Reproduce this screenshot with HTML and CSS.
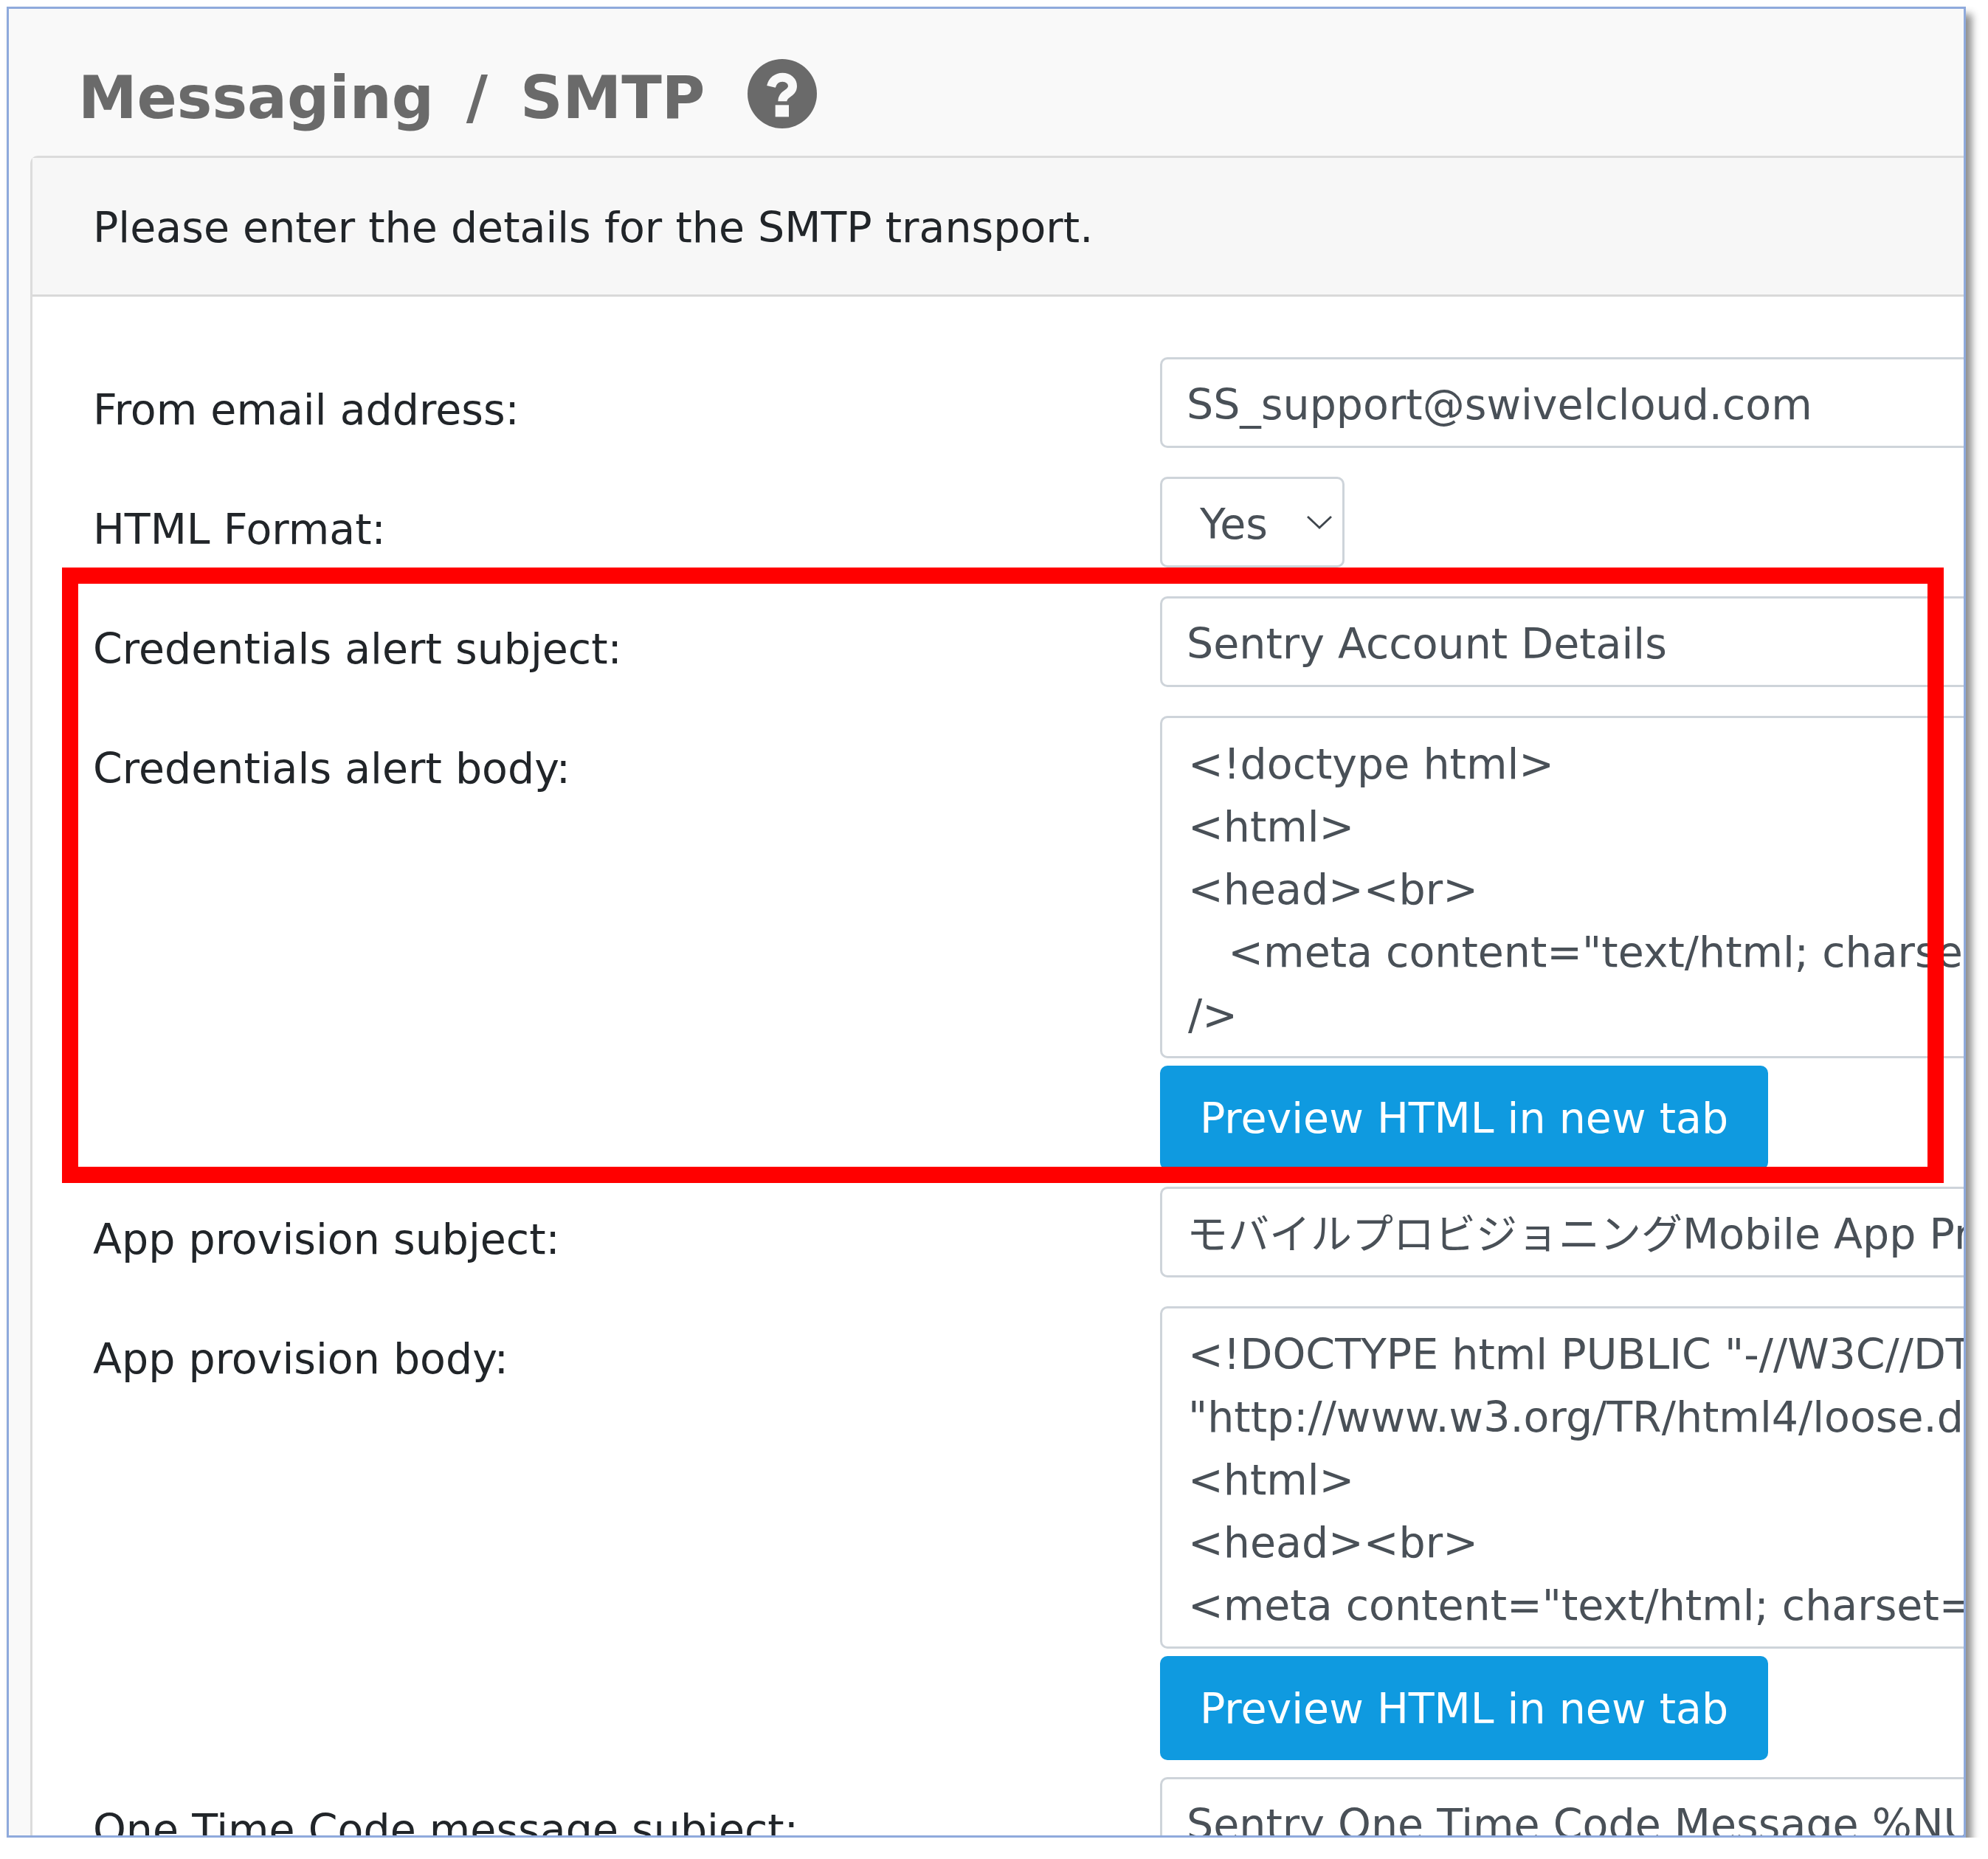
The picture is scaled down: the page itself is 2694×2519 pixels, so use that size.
FILE: index.html
```html
<!DOCTYPE html>
<html>
<head>
    <title>Messaging / SMTP</title>
    <link rel="stylesheet" href="styles.css">
</head>
<body>
    <div class="frame">
        <h1 class="page-title">
            <span>Messaging / SMTP</span>
            <svg class="help-icon" viewBox="0 0 282 282">
                <circle cx="141" cy="141" r="141" fill="#6a6a6a"/>
                <path d="M96 112c6-24 24-38 46-38 24 0 41 16 41 36 0 32-41 28-41 62" fill="none" stroke="#f9f9f9" stroke-width="36"/>
                <rect x="113" y="187" width="55" height="48" fill="#f9f9f9"/>
            </svg>
        </h1>
        <div class="card">
            <div class="card-header">Please enter the details for the SMTP transport.</div>
            <div class="card-body">
                <div class="form-row">
                    <label>From email address:</label>
                    <div class="field"><div class="input">SS_support@swivelcloud.com</div></div>
                </div>
                <div class="form-row">
                    <label>HTML Format:</label>
                    <div class="field">
                        <div class="select"><span class="select-value">Yes</span>
                            <svg class="chevron" viewBox="0 0 34 19"><path d="M1 2l16 15L33 2" fill="none" stroke="#3f464d" stroke-width="2.8"/></svg>
                        </div>
                    </div>
                </div>
                <div class="form-row">
                    <label>Credentials alert subject:</label>
                    <div class="field"><div class="input">Sentry Account Details</div></div>
                </div>
                <div class="form-row form-row-body">
                    <label>Credentials alert body:</label>
                    <div class="field">
                        <div class="textarea">&lt;!doctype html&gt;
&lt;html&gt;
&lt;head&gt;&lt;br&gt;
   &lt;meta content="text/html; charset=UTF-8" http-equiv="Content-Type"
/&gt;</div>
                        <div class="btn">Preview HTML in new tab</div>
                    </div>
                </div>
                <div class="form-row">
                    <label>App provision subject:</label>
                    <div class="field"><div class="input"><span class="cjk">モバイルプロビジョニング</span>Mobile App Provisioning</div></div>
                </div>
                <div class="form-row form-row-body">
                    <label>App provision body:</label>
                    <div class="field">
                        <div class="textarea">&lt;!DOCTYPE html PUBLIC "-//W3C//DTD HTML 4.01 Transitional//EN"
"http://www.w3.org/TR/html4/loose.dtd"&gt;
&lt;html&gt;
&lt;head&gt;&lt;br&gt;
&lt;meta content="text/html; charset=UTF-8" http-equiv="Content-Type" /&gt;</div>
                        <div class="btn">Preview HTML in new tab</div>
                    </div>
                </div>
                <div class="form-row">
                    <label>One Time Code message subject:</label>
                    <div class="field"><div class="input">Sentry One Time Code Message %NUMBER%</div></div>
                </div>
            </div>
        </div>
        <div class="highlight"></div>
    </div>
</body>
</html>
```

FILE: styles.css
```css
body { margin: 0; background: #fff; font-family: "DejaVu Sans", "Noto Sans CJK JP", sans-serif; font-size: 57px; line-height: 85px; color: #212529; }
.frame { position: relative; box-sizing: border-box; width: 2655px; height: 2481px; margin: 9px 0 0 9px; border: 3px solid #8faadc; background: #f9f9f9; overflow: hidden; box-shadow: 8px 10px 10px rgba(0,0,0,0.45); }
.page-title { display: flex; align-items: center; gap: 58px; height: 199px; margin: 0; padding: 42px 0 0 94px; box-sizing: border-box; font-size: 80px; font-weight: bold; word-spacing: 16px; color: #6a6a6a; }
.help-icon { width: 94px; height: 94px; margin-top: -12px; }
.card { margin-left: 29px; width: 2700px; border: 3px solid #dcdcdc; border-radius: 10px 0 0 0; background: #fff; }
.card-header { height: 188px; box-sizing: border-box; padding: 52px 0 0 82px; background: #f7f7f7; border-bottom: 3px solid #d9d9d9; }
.card-body { padding: 82px 0 0 82px; }
.form-row { display: flex; margin-bottom: 39px; }
.form-row label { width: 1446px; flex: none; padding-top: 29px; }
.field { flex: 1; }
.input, .textarea, .select { box-sizing: border-box; border: 3px solid #ced4da; border-radius: 10px; color: #495057; background: #fff; white-space: nowrap; overflow: hidden; }
.input { height: 123px; padding: 19px 33px; }
.cjk { font-size: 56px; }
.select { display: flex; align-items: center; justify-content: space-between; width: 250px; height: 123px; padding: 0 14px 0 51px; }
.select-value { padding-top: 6px; }
.chevron { width: 34px; height: 19px; }
.textarea { height: 464px; padding: 20px 35px; white-space: pre; }
.btn { display: block; margin-top: 10px; width: 824px; height: 141px; box-sizing: border-box; background: #0f9ae0; color: #fff; border-radius: 10px; text-align: center; line-height: 143px; }
.form-row-body { margin-bottom: 23px; }
.highlight { position: absolute; left: 72px; top: 757px; width: 2506px; height: 790px; border: 22px solid #ff0000; pointer-events: none; }
```
